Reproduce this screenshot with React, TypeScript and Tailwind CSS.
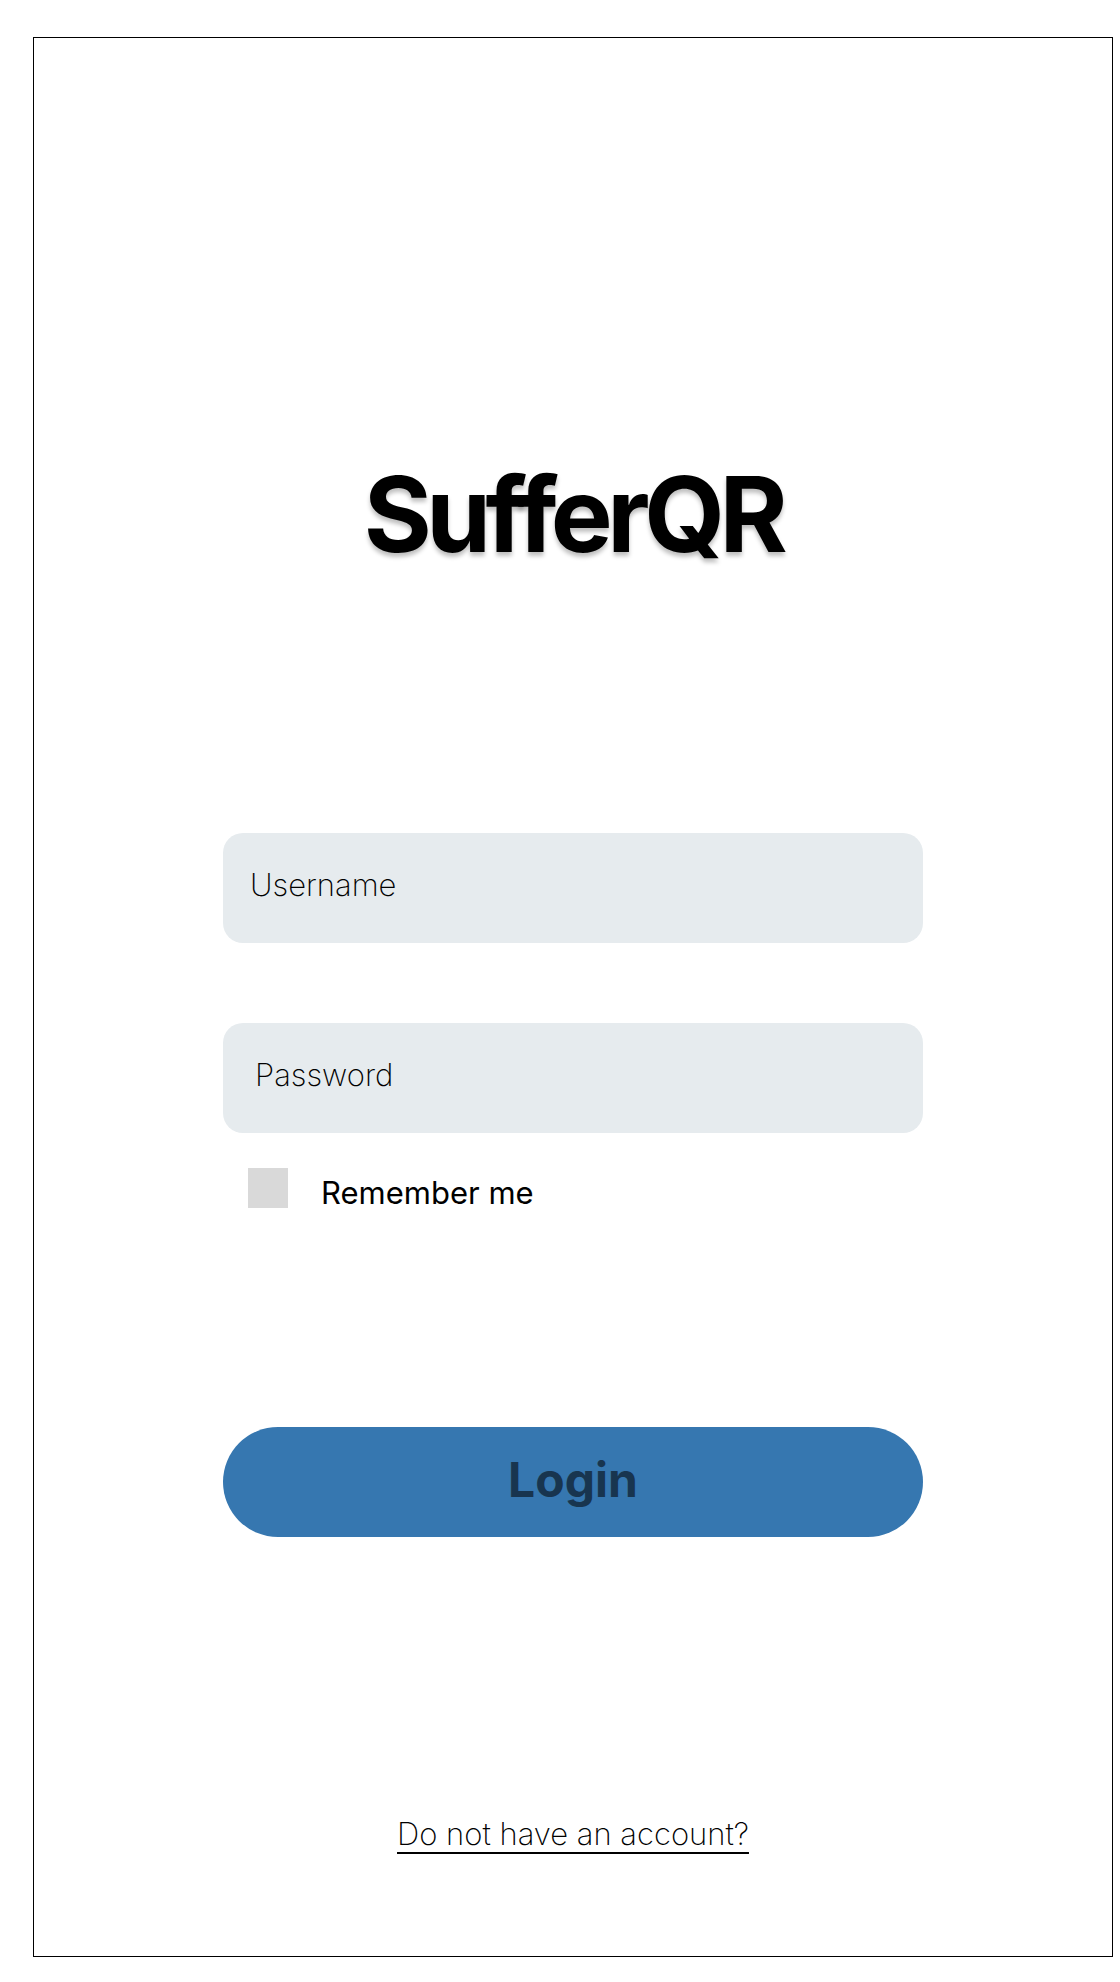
import React from "react";

export default function App() {
  return (
    <div className="w-[1120px] h-[1982px] bg-white pl-[33px] pt-[37px] font-['Inter',_sans-serif]">
      <div className="w-[1080px] h-[1920px] border border-black flex flex-col items-center">
        <h1 className="mt-[424px] text-[104px] leading-none font-bold text-black tracking-[-5.5px] [text-shadow:0_4px_4px_rgba(0,0,0,0.25)]">
          SufferQR
        </h1>
        <div className="mt-[267px] w-[700px] h-[110px] rounded-[20px] bg-[#e6ebee] flex items-center pl-[27px] pb-[7px]">
          <span className="text-[31px] leading-none font-extralight text-black">Username</span>
        </div>
        <div className="mt-[80px] w-[700px] h-[110px] rounded-[20px] bg-[#e6ebee] flex items-center pl-[32px] pb-[7px]">
          <span className="text-[31px] leading-none font-extralight text-black">Password</span>
        </div>
        <div className="mt-[35px] w-[700px] flex items-start pl-[25px]">
          <div className="w-[40px] h-[40px] bg-[#d9d9d9]" />
          <span className="ml-[33px] mt-[9px] text-[31px] leading-none font-normal text-black">Remember me</span>
        </div>
        <button className="mt-[219px] w-[700px] h-[110px] rounded-full bg-[#3677b0] flex items-center justify-center pb-[4px]">
          <span className="text-[48px] leading-none font-bold text-[#18354f]">Login</span>
        </button>
        <a className="mt-[281px] text-[31px] leading-none font-extralight text-black underline underline-offset-[7px] decoration-[length:1.5px]">
          Do not have an account?
        </a>
      </div>
    </div>
  );
}
